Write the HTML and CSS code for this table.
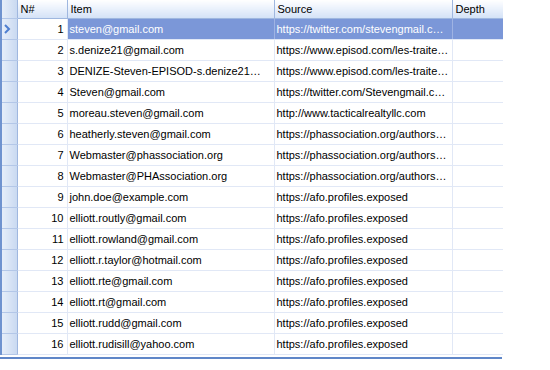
FILE: index.html
```html
<!DOCTYPE html>
<html lang="en">
<head>
    <meta charset="UTF-8">
    <title>Results Grid</title>
    <link rel="stylesheet" href="styles.css">
</head>
<body>
    <div class="grid">
        <table>
            <colgroup>
                <col class="c-rh">
                <col class="c-num">
                <col class="c-item">
                <col class="c-src">
                <col class="c-depth">
            </colgroup>
            <thead>
                <tr>
                    <th class="rh"></th>
                    <th>N#</th>
                    <th>Item</th>
                    <th>Source</th>
                    <th>Depth</th>
                </tr>
            </thead>
            <tbody>
                <tr class="selected">
                    <td class="rh"><svg width="8" height="10" viewBox="0 0 8 10"><path d="M2 1 L6 5 L2 9" fill="none" stroke="#4f7fd0" stroke-width="2"/></svg></td>
                    <td class="num">1</td>
                    <td>steven@gmail.com</td>
                    <td>https://twitter.com/stevengmail.com/status</td>
                    <td></td>
                </tr>
                <tr><td class="rh"></td><td class="num">2</td><td>s.denize21@gmail.com</td><td>https://www.episod.com/les-traiteurs</td><td></td></tr>
                <tr><td class="rh"></td><td class="num">3</td><td>DENIZE-Steven-EPISOD-s.denize21@gmail.com</td><td>https://www.episod.com/les-traiteurs</td><td></td></tr>
                <tr><td class="rh"></td><td class="num">4</td><td>Steven@gmail.com</td><td>https://twitter.com/Stevengmail.com/status</td><td></td></tr>
                <tr><td class="rh"></td><td class="num">5</td><td>moreau.steven@gmail.com</td><td>http://www.tacticalrealtyllc.com</td><td></td></tr>
                <tr><td class="rh"></td><td class="num">6</td><td>heatherly.steven@gmail.com</td><td>https://phassociation.org/authors/steven</td><td></td></tr>
                <tr><td class="rh"></td><td class="num">7</td><td>Webmaster@phassociation.org</td><td>https://phassociation.org/authors/webmaster</td><td></td></tr>
                <tr><td class="rh"></td><td class="num">8</td><td>Webmaster@PHAssociation.org</td><td>https://phassociation.org/authors/webmaster</td><td></td></tr>
                <tr><td class="rh"></td><td class="num">9</td><td>john.doe@example.com</td><td>https://afo.profiles.exposed</td><td></td></tr>
                <tr><td class="rh"></td><td class="num">10</td><td>elliott.routly@gmail.com</td><td>https://afo.profiles.exposed</td><td></td></tr>
                <tr><td class="rh"></td><td class="num">11</td><td>elliott.rowland@gmail.com</td><td>https://afo.profiles.exposed</td><td></td></tr>
                <tr><td class="rh"></td><td class="num">12</td><td>elliott.r.taylor@hotmail.com</td><td>https://afo.profiles.exposed</td><td></td></tr>
                <tr><td class="rh"></td><td class="num">13</td><td>elliott.rte@gmail.com</td><td>https://afo.profiles.exposed</td><td></td></tr>
                <tr><td class="rh"></td><td class="num">14</td><td>elliott.rt@gmail.com</td><td>https://afo.profiles.exposed</td><td></td></tr>
                <tr><td class="rh"></td><td class="num">15</td><td>elliott.rudd@gmail.com</td><td>https://afo.profiles.exposed</td><td></td></tr>
                <tr><td class="rh"></td><td class="num">16</td><td>elliott.rudisill@yahoo.com</td><td>https://afo.profiles.exposed</td><td></td></tr>
            </tbody>
        </table>
    </div>
</body>
</html>
```

FILE: styles.css
```css
body {
    margin: 0;
    background-color: #ffffff;
    font-family: "Liberation Sans", Arial, sans-serif;
    font-size: 11px;
    color: #000000;
}
.grid {
    width: 502px;
    padding-bottom: 2px;
    border-bottom: 2px solid #5f86c8;
}
table {
    width: 502px;
    table-layout: fixed;
    border-collapse: collapse;
}
.c-rh { width: 16px; }
.c-num { width: 50px; }
.c-item { width: 207px; }
.c-src { width: 178px; }
.c-depth { width: 51px; }

th {
    height: 18px;
    padding: 0 3px;
    text-align: left;
    font-weight: normal;
    background: linear-gradient(#ffffff, #d4e2f7);
    border-right: 1px solid #9fb7df;
    border-bottom: 1px solid #9fb7df;
    white-space: nowrap;
}
th:last-child {
    border-right: none;
}
td {
    height: 20px;
    padding: 0 2px;
    border-right: 1px solid #e1e8f6;
    border-bottom: 1px solid #e1e8f6;
    white-space: nowrap;
    overflow: hidden;
    text-overflow: ellipsis;
}
td:last-child {
    border-right: none;
}
td.num {
    text-align: right;
    padding-right: 3px;
}
.rh, th.rh {
    padding: 0;
    background: linear-gradient(90deg, #e6eef9, #c9d9f1);
    border-left: 2px solid #6f93cf;
    border-right: 1px solid #9fb7df;
    border-bottom: 1px solid #b3c7e8;
    vertical-align: middle;
}
.rh svg {
    display: block;
    margin-left: 1px;
}
tr.selected td {
    background-color: #7b97d8;
    color: #ffffff;
    border-right-color: #9fb3e3;
}
tr.selected td.num {
    background-color: #ffffff;
    color: #000000;
    border-right-color: #e1e8f6;
}
tr.selected td.rh {
    background: linear-gradient(90deg, #e6eef9, #c9d9f1);
    border-right-color: #9fb7df;
}
```
